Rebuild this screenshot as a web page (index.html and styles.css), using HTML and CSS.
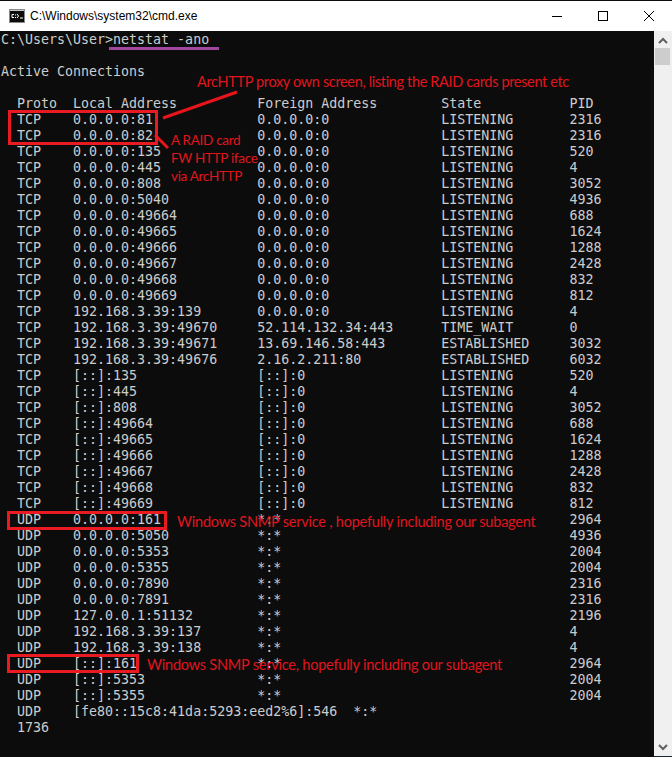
FILE: index.html
```html
<!DOCTYPE html>
<html lang="en">
<head>
<meta charset="utf-8">
<title>C:\Windows\system32\cmd.exe</title>
<link rel="stylesheet" href="styles.css">
</head>
<body>
<div class="window">
  <header class="titlebar">
    <svg class="app-icon" width="16" height="16" viewBox="0 0 16 16">
      <rect x="0" y="1" width="16" height="14" fill="#8a8a8a"/>
      <rect x="1" y="3" width="14" height="11" fill="#0c0c0c"/>
      <rect x="1" y="2" width="14" height="1" fill="#c8c8c8"/>
      <path d="M5 6.5H3v3h2M6.5 6.5v1M6.5 9v1M8 6l1.5 2L8 10M11 10h3" fill="none" stroke="#fff" stroke-width="1"/>
    </svg>
    <span class="title">C:\Windows\system32\cmd.exe</span>
    <div class="controls">
      <svg class="ctl" width="46" height="30" viewBox="0 0 46 30"><path d="M18 15.5h10" stroke="#000" fill="none"/></svg>
      <svg class="ctl" width="46" height="30" viewBox="0 0 46 30"><rect x="18.5" y="10.5" width="9" height="9" stroke="#000" fill="none"/></svg>
      <svg class="ctl" width="46" height="30" viewBox="0 0 46 30"><path d="M18 10l10 10M28 10L18 20" stroke="#000" fill="none"/></svg>
    </div>
  </header>
  <div class="body">
    <main class="console">
<pre class="screen">C:\Users\User&gt;netstat -ano

Active Connections

  Proto  Local Address          Foreign Address        State           PID
  TCP    0.0.0.0:81             0.0.0.0:0              LISTENING       2316
  TCP    0.0.0.0:82             0.0.0.0:0              LISTENING       2316
  TCP    0.0.0.0:135            0.0.0.0:0              LISTENING       520
  TCP    0.0.0.0:445            0.0.0.0:0              LISTENING       4
  TCP    0.0.0.0:808            0.0.0.0:0              LISTENING       3052
  TCP    0.0.0.0:5040           0.0.0.0:0              LISTENING       4936
  TCP    0.0.0.0:49664          0.0.0.0:0              LISTENING       688
  TCP    0.0.0.0:49665          0.0.0.0:0              LISTENING       1624
  TCP    0.0.0.0:49666          0.0.0.0:0              LISTENING       1288
  TCP    0.0.0.0:49667          0.0.0.0:0              LISTENING       2428
  TCP    0.0.0.0:49668          0.0.0.0:0              LISTENING       832
  TCP    0.0.0.0:49669          0.0.0.0:0              LISTENING       812
  TCP    192.168.3.39:139       0.0.0.0:0              LISTENING       4
  TCP    192.168.3.39:49670     52.114.132.34:443      TIME_WAIT       0
  TCP    192.168.3.39:49671     13.69.146.58:443       ESTABLISHED     3032
  TCP    192.168.3.39:49676     2.16.2.211:80          ESTABLISHED     6032
  TCP    [::]:135               [::]:0                 LISTENING       520
  TCP    [::]:445               [::]:0                 LISTENING       4
  TCP    [::]:808               [::]:0                 LISTENING       3052
  TCP    [::]:49664             [::]:0                 LISTENING       688
  TCP    [::]:49665             [::]:0                 LISTENING       1624
  TCP    [::]:49666             [::]:0                 LISTENING       1288
  TCP    [::]:49667             [::]:0                 LISTENING       2428
  TCP    [::]:49668             [::]:0                 LISTENING       832
  TCP    [::]:49669             [::]:0                 LISTENING       812
  UDP    0.0.0.0:161            *:*                                    2964
  UDP    0.0.0.0:5050           *:*                                    4936
  UDP    0.0.0.0:5353           *:*                                    2004
  UDP    0.0.0.0:5355           *:*                                    2004
  UDP    0.0.0.0:7890           *:*                                    2316
  UDP    0.0.0.0:7891           *:*                                    2316
  UDP    127.0.0.1:51132        *:*                                    2196
  UDP    192.168.3.39:137       *:*                                    4
  UDP    192.168.3.39:138       *:*                                    4
  UDP    [::]:161               *:*                                    2964
  UDP    [::]:5353              *:*                                    2004
  UDP    [::]:5355              *:*                                    2004
  UDP    [fe80::15c8:41da:5293:eed2%6]:546  *:*
  1736</pre>
      <svg class="overlay-lines" width="654" height="726" viewBox="0 0 654 726">
        <path d="M163 87L237 61" class="arrow"/>
        <path d="M155 104L168 117" class="arrow"/>
        <path d="M109 17.5H219" class="underline"/>
      </svg>
      <div class="box box-a"></div>
      <div class="box box-b"></div>
      <div class="box box-c"></div>
      <span class="note note-proxy">ArcHTTP proxy own screen, listing the RAID cards present etc</span>
      <span class="note note-raid">A RAID card<br>FW HTTP iface<br>via ArcHTTP</span>
      <span class="note note-snmp4">Windows SNMP service , hopefully including our subagent</span>
      <span class="note note-snmp6">Windows SNMP service, hopefully including our subagent</span>
    </main>
    <aside class="scrollbar">
      <svg width="18" height="17" viewBox="0 0 18 17"><path d="M5 12l4-4 4 4" class="chev"/></svg>
      <div class="thumb"></div>
      <div class="track"></div>
      <svg width="18" height="17" viewBox="0 0 18 17"><path d="M5 6l4 4 4-4" class="chev"/></svg>
    </aside>
  </div>
</div>
</body>
</html>
```
FILE: styles.css
```css
html, body {
  margin: 0;
  padding: 0;
  background: #0c0c0c;
}

.window {
  width: 672px;
  height: 757px;
  display: flex;
  flex-direction: column;
  overflow: hidden;
}

.titlebar {
  height: 30px;
  margin-top: 1px;
  flex: none;
  display: flex;
  align-items: center;
  background: #fff;
  padding-left: 9px;
}

.app-icon {
  flex: none;
  margin-right: 5px;
}

.title {
  font: 12px "Liberation Sans", sans-serif;
  color: #000;
}

.controls {
  margin-left: auto;
  display: flex;
}

.body {
  flex: 1;
  display: flex;
  min-height: 0;
}

.console {
  position: relative;
  width: 654px;
  flex: none;
  background: #0c0c0c;
  overflow: hidden;
}

.screen {
  margin: 0;
  padding: 1px 0 0 1px;
  font: 13.3px/16px "DejaVu Sans Mono", monospace;
  color: #cccccc;
}

.overlay-lines {
  position: absolute;
  left: 0;
  top: 0;
}

.arrow {
  stroke: #e8141c;
  stroke-width: 3;
  fill: none;
}

.underline {
  stroke: #a2479f;
  stroke-width: 3;
  fill: none;
}

.box {
  position: absolute;
  border: 3px solid #ea1a22;
  box-sizing: border-box;
}

.box-a { left: 8px; top: 79px; width: 150px; height: 35px; }
.box-b { left: 7px; top: 480px; width: 160px; height: 19px; }
.box-c { left: 7px; top: 623px; width: 132px; height: 19px; }

.note {
  position: absolute;
  font: 14.5px/18px Lato, sans-serif;
  color: #e0151e;
  white-space: nowrap;
}

.note-proxy { left: 197px; top: 42px; letter-spacing: -0.35px; }
.note-raid { left: 171px; top: 100px; font-size: 13.5px; letter-spacing: -0.3px; }
.note-snmp4 { left: 177px; top: 482px; letter-spacing: -0.22px; }
.note-snmp6 { left: 147px; top: 625px; letter-spacing: -0.22px; }

.scrollbar {
  width: 18px;
  flex: none;
  display: flex;
  flex-direction: column;
  background: #f0f0f0;
  border-bottom: 1px solid #1c2733;
}

.chev {
  fill: none;
  stroke: #606060;
  stroke-width: 2;
}

.thumb {
  height: 17px;
  margin: 0 2px 0 1px;
  background: #cdcdcd;
}

.track {
  flex: 1;
}
```
